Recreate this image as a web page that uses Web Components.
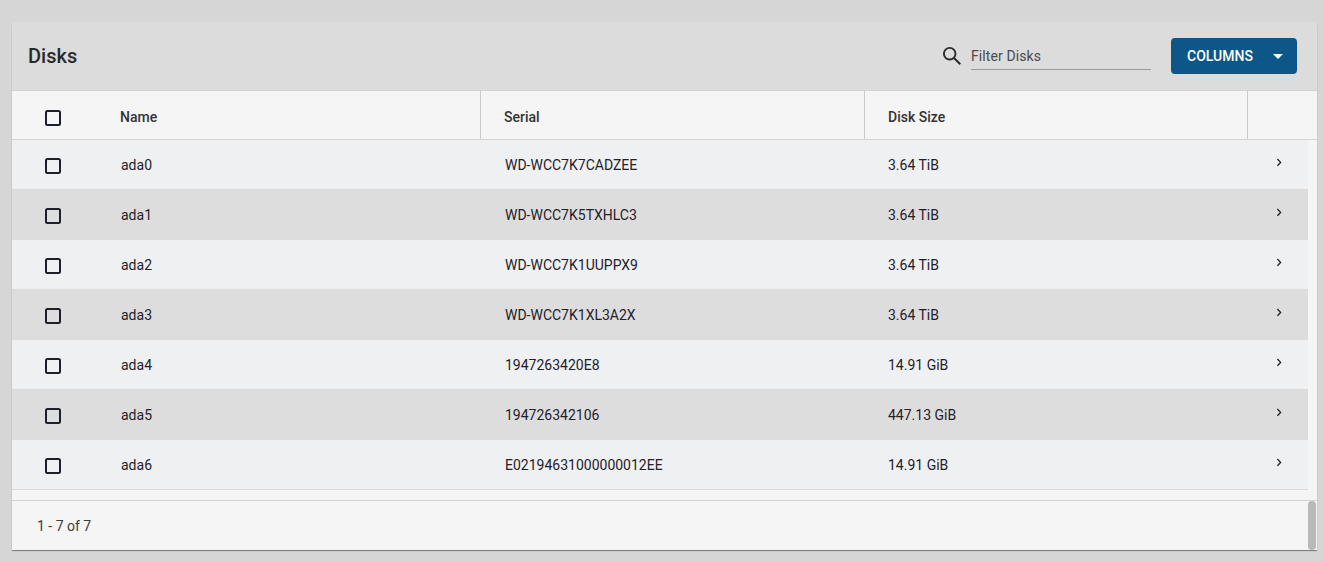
<!DOCTYPE html>
<html lang="en"><head><meta charset="utf-8"><title>Disks</title>
<style>
html,body{margin:0;height:561px;overflow:hidden;background:#d6d6d6;font-family:Roboto,sans-serif}
</style></head><body>
<disk-card title-text="Disks">
<disk-row name="ada0" serial="WD-WCC7K7CADZEE" size="3.64 TiB"></disk-row>
<disk-row name="ada1" serial="WD-WCC7K5TXHLC3" size="3.64 TiB" alt></disk-row>
<disk-row name="ada2" serial="WD-WCC7K1UUPPX9" size="3.64 TiB"></disk-row>
<disk-row name="ada3" serial="WD-WCC7K1XL3A2X" size="3.64 TiB" alt></disk-row>
<disk-row name="ada4" serial="1947263420E8" size="14.91 GiB"></disk-row>
<disk-row name="ada5" serial="194726342106" size="447.13 GiB" alt></disk-row>
<disk-row name="ada6" serial="E02194631000000012EE" size="14.91 GiB"></disk-row>
</disk-card>
<script>
const box='<svg width="16" height="16" viewBox="0 0 16 16" style="display:block"><rect x="1" y="1" width="14" height="14" rx="1.5" fill="none" stroke="#1c1f2b" stroke-width="2"/></svg>';
customElements.define('disk-check',class extends HTMLElement{
  constructor(){super();this.attachShadow({mode:'open'}).innerHTML=`<style>:host{display:block;width:16px;height:16px}</style>${box}`;}
});
customElements.define('disk-row',class extends HTMLElement{
  constructor(){super();this.attachShadow({mode:'open'});}
  connectedCallback(){
    const g=a=>this.getAttribute(a);
    this.shadowRoot.innerHTML=`<style>
    :host{display:grid;grid-template-columns:109px 384px 383px 1fr 32px;height:50px;box-sizing:border-box;border-bottom:1px solid #dcdcdc;background:#eff0f2;color:#1f212b;font-size:14px;align-items:center}
    :host([alt]){background:#dddddd}
    .c{padding-left:33px;padding-top:3px}
    .a{display:flex;padding-bottom:4px}
    </style>
    <div class="c"><disk-check></disk-check></div>
    <div>${g('name')}</div>
    <div>${g('serial')}</div>
    <div>${g('size')}</div>
    <div class="a"><svg width="6" height="9" viewBox="0 0 6 9"><path d="M1.4 1 4.6 4.4 1.4 7.8" fill="none" stroke="#1f212b" stroke-width="1.3"/></svg></div>`;
  }
});
customElements.define('disk-card',class extends HTMLElement{
  constructor(){super();this.attachShadow({mode:'open'}).innerHTML=`<style>
  :host{display:flex;flex-direction:column;position:relative;box-sizing:border-box;width:1305px;height:528px;margin:22px 0 0 12px;background:#f5f5f5;border-radius:4px 4px 0 0;box-shadow:0 1px 1px rgba(0,0,0,.45);overflow:hidden}
  header{display:flex;align-items:center;height:69px;flex:none;background:#dcdcdc;padding:0 20px 0 16px;box-sizing:border-box;border-bottom:1px solid #d2d2d2}
  h1{margin:0;font-size:20px;font-weight:500;color:#2a2a2a;flex:1;padding-bottom:1px}
  .filter{display:flex;align-items:center;gap:9px;margin-right:20px}
  .input{width:180px;height:27px;border-bottom:1px solid #9a9a9a;box-sizing:border-box;font-size:14px;color:#4a4a4a;line-height:27px;letter-spacing:.1px;margin-top:1px}
  button{all:unset;box-sizing:border-box;display:flex;align-items:center;width:126px;height:36px;background:#0d5688;border-radius:4px;color:#fff;font:500 14px Roboto,sans-serif;padding-left:16px}
  button svg{margin-left:20px}
  .head{display:grid;grid-template-columns:108px 361px 384px 383px 1fr;height:49px;flex:none;box-sizing:border-box;border-bottom:1px solid #d5d5d5;align-items:stretch;font-size:14px;font-weight:500;color:#333}
  .head>div{display:flex;align-items:center;box-sizing:border-box;border-right:1px solid #c9c9c9;padding-left:23px;padding-top:4px}
  .head>div:first-child{border:0;padding-left:33px;padding-top:6px}
  .head>div:nth-child(2){padding-left:0}
  .head>div:last-child{border:0}
  .body{flex:1;margin-right:9px}
  footer{height:50px;flex:none;box-sizing:border-box;border-top:1px solid #d5d5d5;display:flex;align-items:center;padding-left:25px;font-size:14px;color:#3c3c3c}
  .thumb{position:absolute;right:1px;top:479px;width:8px;height:49px;border-radius:4px;background:#b9b9b9}
  </style>
  <header><h1></h1>
    <div class="filter">
      <svg width="20" height="20" viewBox="0 0 20 20"><circle cx="7.7" cy="7.7" r="5.8" fill="none" stroke="#2b2b2b" stroke-width="1.9"/><path d="M12 12 18.3 18.3" stroke="#2b2b2b" stroke-width="2"/></svg>
      <div class="input">Filter Disks</div>
    </div>
    <button>COLUMNS<svg width="10" height="5" viewBox="0 0 10 5"><path d="M0 0h10L5 5z" fill="#fff"/></svg></button>
  </header>
  <div class="head"><div><disk-check></disk-check></div><div>Name</div><div>Serial</div><div>Disk Size</div><div></div></div>
  <div class="body"><slot></slot></div>
  <footer>1 - 7 of 7</footer>
  <div class="thumb"></div>`;
  }
  connectedCallback(){this.shadowRoot.querySelector('h1').textContent=this.getAttribute('title-text');}
});
</script>
</body></html>
